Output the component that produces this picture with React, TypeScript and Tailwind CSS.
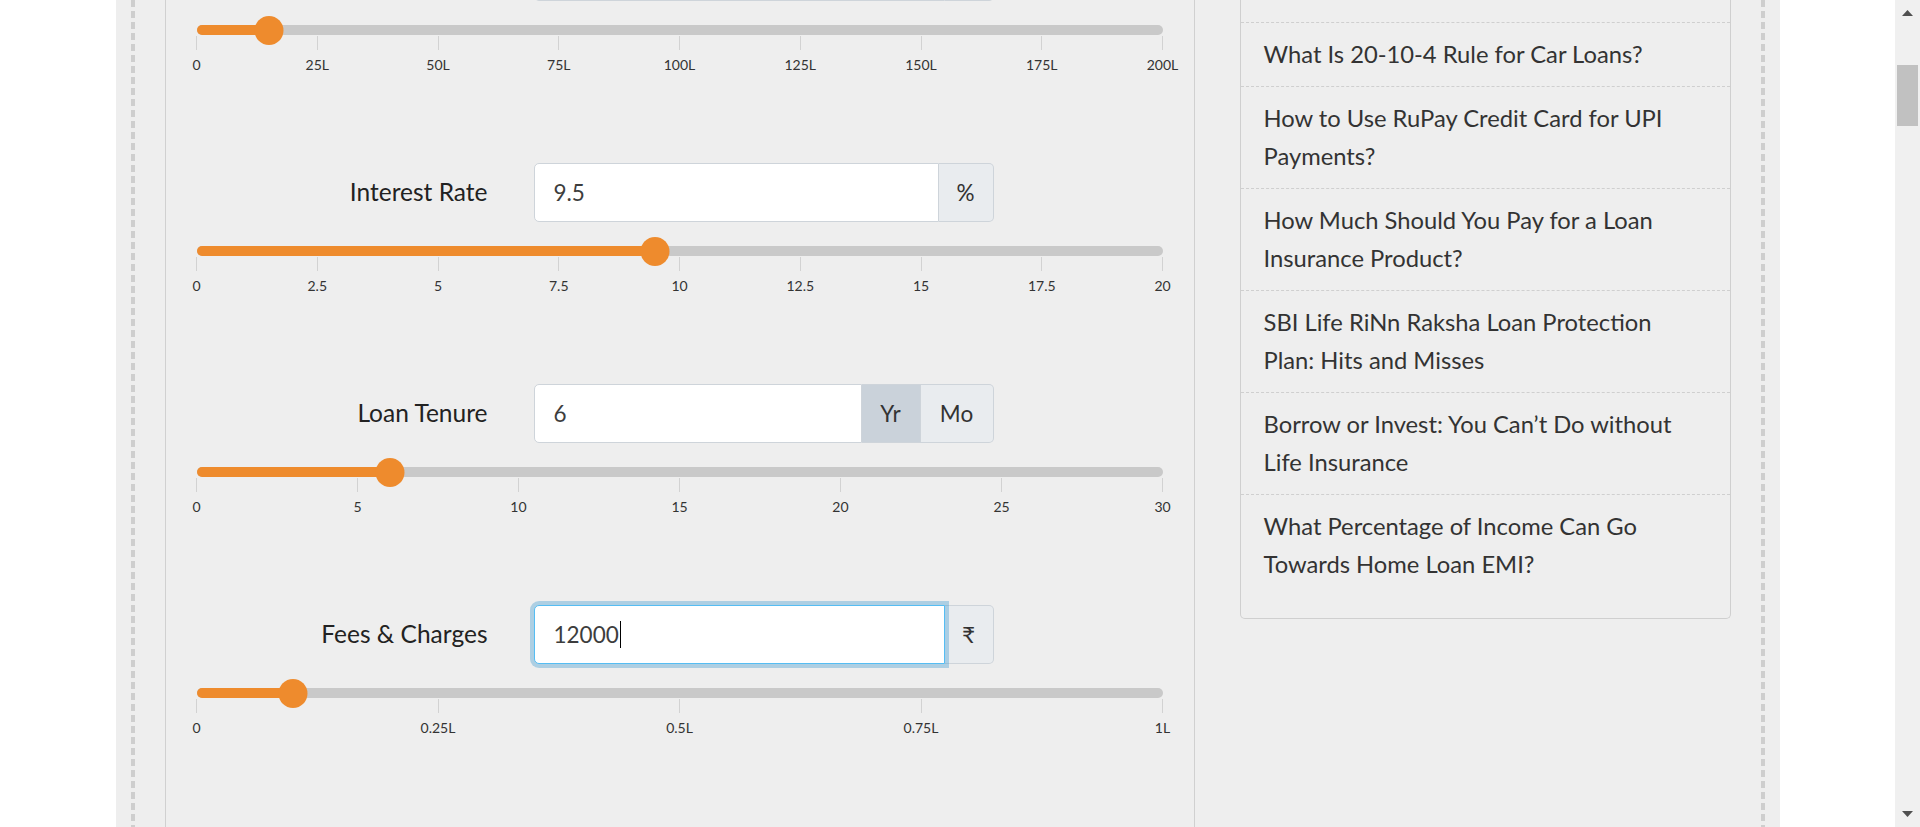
import React from 'react';

type Addon = { text: string; width: string; active?: boolean };

interface SectionData {
  label: string;
  value: string;
  addons: Addon[];
  ratio: number;
  ticks: string[];
  focused?: boolean;
}

// first row is scrolled out of view, only its slider shows
const sections: SectionData[] = [
  {
    label: '',
    value: '',
    addons: [{ text: '', width: 'w-[49px]' }],
    ratio: 0.075,
    ticks: ['0', '25L', '50L', '75L', '100L', '125L', '150L', '175L', '200L'],
  },
  {
    label: 'Interest Rate',
    value: '9.5',
    addons: [{ text: '%', width: 'w-[55px]' }],
    ratio: 0.475,
    ticks: ['0', '2.5', '5', '7.5', '10', '12.5', '15', '17.5', '20'],
  },
  {
    label: 'Loan Tenure',
    value: '6',
    addons: [
      { text: 'Yr', width: 'w-[59px]', active: true },
      { text: 'Mo', width: 'w-[73px]' },
    ],
    ratio: 0.2,
    ticks: ['0', '5', '10', '15', '20', '25', '30'],
  },
  {
    label: 'Fees & Charges',
    value: '12000',
    addons: [{ text: '₹', width: 'w-[49px]' }],
    ratio: 0.1,
    ticks: ['0', '0.25L', '0.5L', '0.75L', '1L'],
    focused: true,
  },
];

const articles: string[][] = [
  ['What Is 20-10-4 Rule for Car Loans?'],
  ['How to Use RuPay Credit Card for UPI', 'Payments?'],
  ['How Much Should You Pay for a Loan', 'Insurance Product?'],
  ['SBI Life RiNn Raksha Loan Protection', 'Plan: Hits and Misses'],
  ['Borrow or Invest: You Can’t Do without', 'Life Insurance'],
  ['What Percentage of Income Can Go', 'Towards Home Loan EMI?'],
];

function Slider({ ratio, ticks }: { ratio: number; ticks: string[] }) {
  return (
    <div className="relative h-[48px] w-[966px]">
      <div className="absolute left-0 top-0 h-[10px] w-full rounded-full bg-[#c9c9c9]" />
      <div
        className="absolute left-0 top-0 h-[10px] rounded-full bg-[#ee8b2d]"
        style={{ width: `${ratio * 100}%` }}
      />
      {ticks.map((t, i) => (
        <div
          key={t}
          className="absolute top-[11px] flex w-0 flex-col items-center"
          style={{ left: `${(i / (ticks.length - 1)) * 100}%` }}
        >
          <div className="h-[14px] w-px shrink-0 bg-[#d2d2d2]" />
          <span className="mt-[7px] whitespace-nowrap text-[14px] leading-[16px] text-[#333]">{t}</span>
        </div>
      ))}
      <div
        className="absolute top-[-9.5px] h-[29px] w-[29px] -translate-x-1/2 rounded-full bg-[#ee8b2d]"
        style={{ left: `${ratio * 100}%` }}
      />
    </div>
  );
}

function Section({ data }: { data: SectionData }) {
  return (
    <div className="flex flex-col pb-[90px]">
      <div className="flex h-[59px] items-center">
        <div className="w-[291px] text-right text-[24.5px] text-[#222]">{data.label}</div>
        <div className="ml-[46px] flex h-full w-[460px]">
          {data.focused ? (
            <div className="relative z-10 flex flex-1 items-center rounded-l-[5px] border border-[#55bdf3] bg-white pl-[19px] text-[22.5px] text-[#3d3d3d] shadow-[0_0_0_4px_rgba(38,143,205,0.32)]">
              {data.value}
              <span className="ml-px h-[27px] w-px bg-black" />
            </div>
          ) : (
            <div className="flex flex-1 items-center rounded-l-[5px] border border-[#ced4da] bg-white pl-[19px] text-[22.5px] text-[#3d3d3d]">
              {data.value}
            </div>
          )}
          {data.addons.map((a, i) => (
            <div
              key={i}
              className={`flex items-center justify-center border-y border-r border-[#ced4da] text-[22.5px] text-[#333] ${a.width} ${
                a.active ? 'bg-[#cad2da]' : 'bg-[#e9ecef]'
              } ${i === data.addons.length - 1 ? 'rounded-r-[5px]' : ''}`}
            >
              {a.text}
            </div>
          ))}
        </div>
      </div>
      <div className="mt-[24px]">
        <Slider ratio={data.ratio} ticks={data.ticks} />
      </div>
    </div>
  );
}

function Scrollbar() {
  return (
    <div className="flex h-full w-[25px] shrink-0 flex-col items-center bg-[#f0f0f0]">
      <svg className="mt-[10px]" width="11" height="6" viewBox="0 0 11 6">
        <polygon points="5.5,0 11,6 0,6" fill="#505050" />
      </svg>
      <div className="mt-[49px] h-[61px] w-[21px] bg-[#c1c1c1]" />
      <svg className="mb-[10px] mt-auto" width="11" height="6" viewBox="0 0 11 6">
        <polygon points="0,0 11,0 5.5,6" fill="#505050" />
      </svg>
    </div>
  );
}

export default function App() {
  return (
    <div className="flex h-[827px] overflow-hidden bg-white font-[Lato,sans-serif]">
      <div className="h-full min-w-0 flex-1">
        <div className="mx-auto flex h-full w-[1664px] bg-[#eeeeee] px-[15px]">
          {/* dashed frame: 4px dashes drawn as side backgrounds */}
          <div className="flex h-full flex-1 gap-[45px] bg-[repeating-linear-gradient(to_bottom,#cecece_0px,#cecece_7px,transparent_7px,transparent_11px),repeating-linear-gradient(to_bottom,#cecece_0px,#cecece_7px,transparent_7px,transparent_11px)] bg-[length:4px_100%] bg-[position:left_top,right_top] bg-no-repeat px-[34px]">
            {/* calculator card */}
            <div className="h-full w-[1030px] shrink-0 overflow-hidden border-x border-[#d0d0d0]">
              <div className="-mt-[58px] pl-[31px]">
                {sections.map((s, i) => (
                  <Section key={i} data={s} />
                ))}
              </div>
            </div>

            {/* related articles */}
            <div className="w-[491px] shrink-0 self-start rounded-b-[5px] border-x border-b border-[#cfcfcf] pb-[22px]">
              <div className="h-[22px]" />
              {articles.map((lines) => (
                <div
                  key={lines[0]}
                  className="border-t border-dashed border-[#cfcfcf] px-[23px] py-[12px] text-[23.75px] leading-[38.5px] text-[#333]"
                >
                  {lines.map((l) => (
                    <div key={l} className="whitespace-nowrap">
                      {l}
                    </div>
                  ))}
                </div>
              ))}
            </div>
          </div>
        </div>
      </div>
      <Scrollbar />
    </div>
  );
}
